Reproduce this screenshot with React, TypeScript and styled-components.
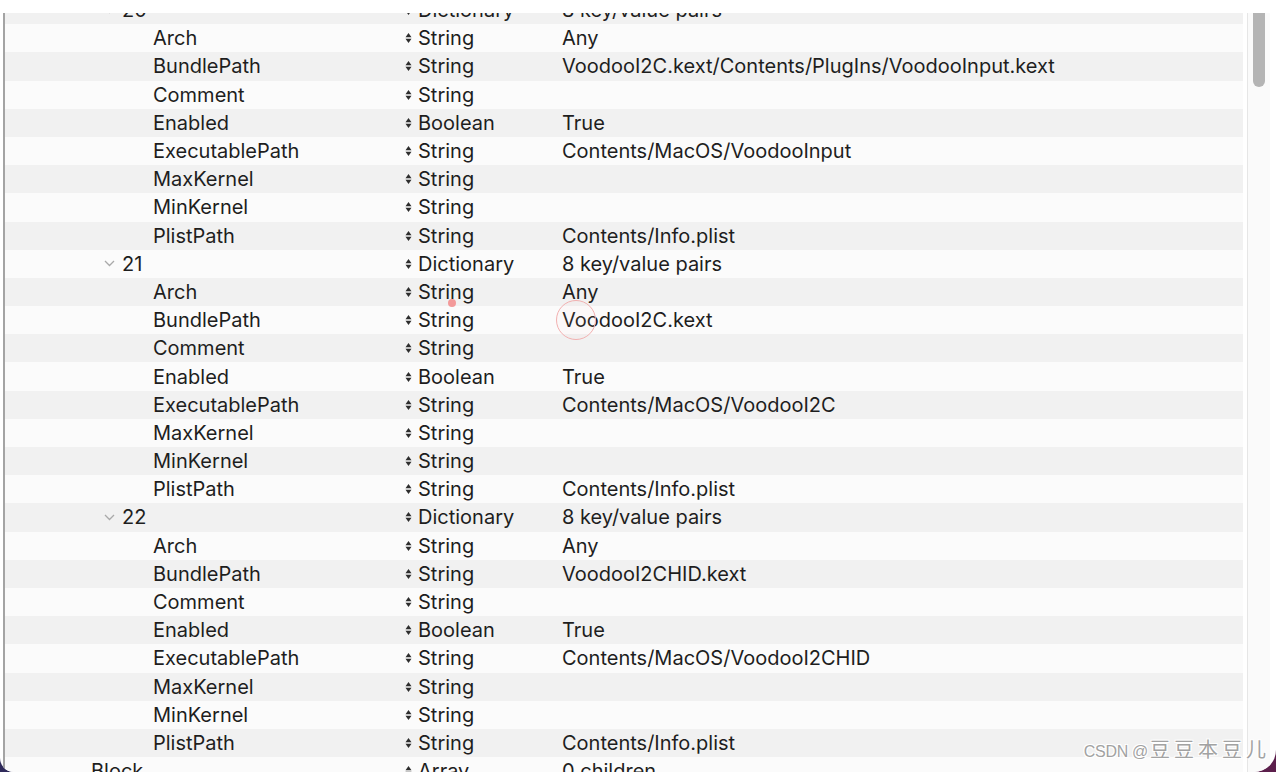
import React from "react";
import styled, { createGlobalStyle } from "styled-components";

const GlobalStyle = createGlobalStyle`
	html, body {
		margin: 0;
		padding: 0;
		width: 1276px;
		height: 772px;
		overflow: hidden;
		background: linear-gradient(90deg, #2f2a5a, #4a2452 60%, #5c1f4c);
	}
`;

interface Entry {
	depth: number;
	key: string;
	type: string;
	value: string;
	open?: boolean;
}

const ROW_H = 28.2;

const kext = (bundle: string, exec: string): Entry[] => [
	{ depth: 2, key: "Arch", type: "String", value: "Any" },
	{ depth: 2, key: "BundlePath", type: "String", value: bundle },
	{ depth: 2, key: "Comment", type: "String", value: "" },
	{ depth: 2, key: "Enabled", type: "Boolean", value: "True" },
	{ depth: 2, key: "ExecutablePath", type: "String", value: exec },
	{ depth: 2, key: "MaxKernel", type: "String", value: "" },
	{ depth: 2, key: "MinKernel", type: "String", value: "" },
	{ depth: 2, key: "PlistPath", type: "String", value: "Contents/Info.plist" },
];

const entries: Entry[] = [
	{ depth: 1, key: "20", type: "Dictionary", value: "8 key/value pairs", open: true },
	...kext("VoodooI2C.kext/Contents/PlugIns/VoodooInput.kext", "Contents/MacOS/VoodooInput"),
	{ depth: 1, key: "21", type: "Dictionary", value: "8 key/value pairs", open: true },
	...kext("VoodooI2C.kext", "Contents/MacOS/VoodooI2C"),
	{ depth: 1, key: "22", type: "Dictionary", value: "8 key/value pairs", open: true },
	...kext("VoodooI2CHID.kext", "Contents/MacOS/VoodooI2CHID"),
	{ depth: 0, key: "Block", type: "Array", value: "0 children" },
];

const Window = styled.div`
	position: relative;
	width: 1276px;
	height: 772px;
	background: #ffffff;
	border-radius: 0 0 22px 14px;
	overflow: hidden;
	display: flex;
	flex-direction: column;
	font-family: Inter, "Noto Sans", "Liberation Sans", sans-serif;
`;

const TopStrip = styled.div`
	height: 13px;
	flex: none;
	background: #ffffff;
`;

const Body = styled.div`
	flex: 1;
	display: flex;
	min-height: 0;
	padding: 0 6px 0 3px;
`;

const List = styled.div`
	flex: 1;
	min-width: 0;
	overflow: hidden;
	border-left: 2px solid #a4a4a4;
`;

const Rows = styled.div`
	margin-top: -17px;
`;

const Row = styled.div<{ $odd: boolean }>`
	height: ${ROW_H}px;
	display: grid;
	grid-template-columns: 398px 159px 1fr;
	align-items: center;
	background: ${(p) => (p.$odd ? "#fbfbfb" : "#f1f1f1")};
	color: #1e1e1e;
	font-size: 20px;
	white-space: nowrap;
`;

const KeyCell = styled.div<{ $depth: number }>`
	display: flex;
	align-items: center;
	padding-left: ${(p) => 68 + p.$depth * 31}px;
`;

const Disclosure = styled.span`
	width: 18px;
	flex: none;
	display: flex;
	align-items: center;
`;

const TypeCell = styled.div`
	display: flex;
	align-items: center;
	gap: 6px;
	padding-left: 2px;
`;

const ValueCell = styled.div`
	overflow: hidden;
	text-overflow: clip;
`;

const Scrollbar = styled.div`
	width: 27px;
	flex: none;
	padding-left: 4px;
	box-sizing: border-box;
	display: flex;
`;

const Track = styled.div`
	flex: 1;
	background: #fafafa;
	border-left: 1px solid #e6e6e6;
	padding-left: 5px;
`;

const Thumb = styled.div`
	width: 12px;
	height: 74px;
	background: #b4b4b4;
	border-radius: 0 0 6px 6px;
`;

const ClickDot = styled.div`
	position: absolute;
	left: 448px;
	top: 299px;
	width: 8px;
	height: 8px;
	border-radius: 50%;
	background: #f39a9a;
`;

const ClickRing = styled.div`
	position: absolute;
	left: 556px;
	top: 300px;
	width: 40px;
	height: 40px;
	box-sizing: border-box;
	border-radius: 50%;
	border: 1.5px solid #f2b0b0;
	background: rgba(255, 200, 200, 0.06);
`;

const Watermark = styled.div`
	position: absolute;
	right: 6px;
	bottom: 9px;
	color: #a2a2a2;
	font-family: "Noto Sans CJK SC", "Noto Sans", sans-serif;
	font-size: 20px;
	line-height: 22px;
	letter-spacing: 4px;
	text-shadow: 0 0 1px #fff, 1px 1px 0 #fff, -1px -1px 0 #fff, 1px -1px 0 #fff, -1px 1px 0 #fff;
	display: flex;
	align-items: baseline;
	gap: 2px;
`;

const WatermarkLatin = styled.span`
	font-family: "Liberation Sans Narrow", "Liberation Sans", sans-serif;
	font-size: 16px;
	letter-spacing: -0.3px;
`;

const Chevron: React.FC = () => (
	<svg width="11" height="7" viewBox="0 0 11 7">
		<path d="M1 1 L5.5 5.5 L10 1" fill="none" stroke="#a9a9a9" strokeWidth="1.3" />
	</svg>
);

const Stepper: React.FC = () => (
	<svg width="7" height="12" viewBox="0 0 7 12">
		<path d="M0.5 5.2 L3.5 1 L6.5 5.2 Z" fill="#2e2e2e" />
		<path d="M0.5 6.8 L3.5 11 L6.5 6.8 Z" fill="#2e2e2e" />
	</svg>
);

const App: React.FC = () => {
	return (
		<>
			<GlobalStyle />
			<Window>
				<TopStrip />
				<Body>
					<List>
						<Rows>
							{entries.map((e, i) => (
								<Row key={i} $odd={i % 2 === 1}>
									<KeyCell $depth={e.depth}>
										<Disclosure>{e.open ? <Chevron /> : null}</Disclosure>
										{e.key}
									</KeyCell>
									<TypeCell>
										<Stepper />
										{e.type}
									</TypeCell>
									<ValueCell>{e.value}</ValueCell>
								</Row>
							))}
						</Rows>
					</List>
					<Scrollbar>
						<Track>
							<Thumb />
						</Track>
					</Scrollbar>
				</Body>
				<ClickDot />
				<ClickRing />
				<Watermark>
					<WatermarkLatin>CSDN @</WatermarkLatin>
					豆豆本豆儿
				</Watermark>
			</Window>
		</>
	);
};

export default App;
